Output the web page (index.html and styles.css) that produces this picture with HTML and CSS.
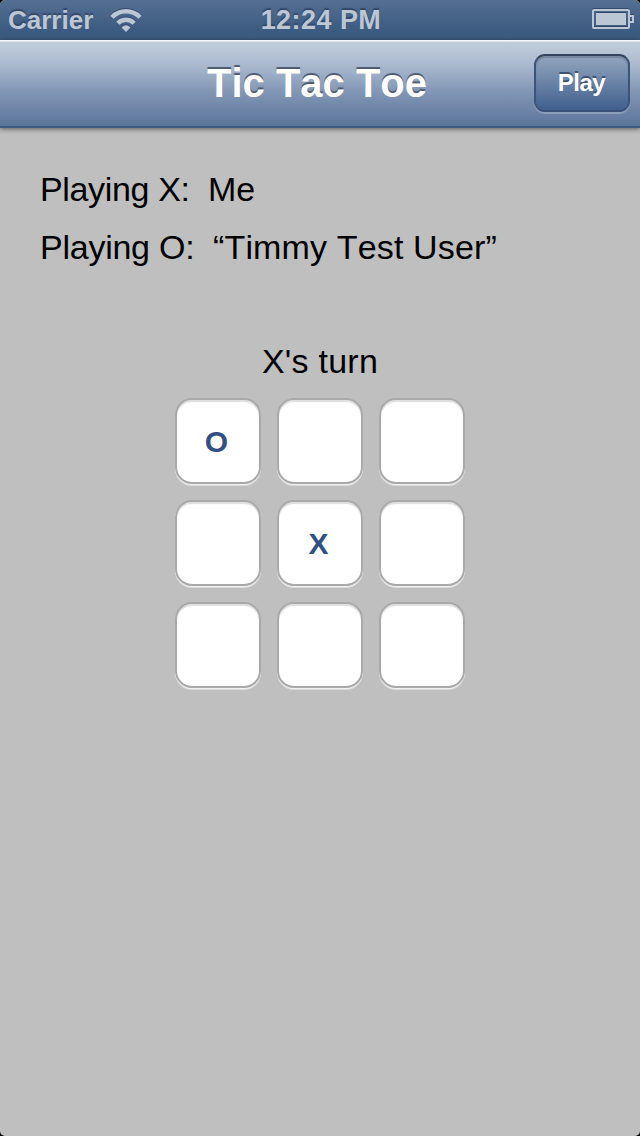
FILE: index.html
```
<!DOCTYPE html>
<html lang="en">
<head>
<meta charset="utf-8">
<title>Tic Tac Toe</title>
<link rel="stylesheet" href="styles.css">
</head>
<body>
<div class="screen">
  <header class="status">
    <div class="status-left">
      <span class="carrier">Carrier</span>
      <svg class="wifi" width="32" height="24" viewBox="0 0 32 24" fill="none" stroke="#bcc7d5">
        <path d="M2 9.2A19.6 19.6 0 0 1 30 9.2" stroke-width="4.4"/>
        <path d="M7.9 15.2A11.2 11.2 0 0 1 24.1 15.2" stroke-width="4.4"/>
        <path d="M11.6 19.6Q16 14.8 20.4 19.6L16 24Z" fill="#bcc7d5" stroke="none"/>
      </svg>
    </div>
    <span class="time">12:24 PM</span>
    <svg class="battery" width="42" height="20" viewBox="0 0 42 20" fill="none">
      <rect x="1" y="1" width="36" height="18" rx="1" stroke="#bcc7d5" stroke-width="2"/>
      <rect x="4" y="4" width="30" height="12" fill="#bcc7d5"/>
      <path d="M38 7h3v6h-3" stroke="#bcc7d5" stroke-width="2"/>
    </svg>
  </header>
  <nav class="navbar">
    <h1 class="title">Tic Tac Toe</h1>
    <button class="play" type="button"><span>Play</span></button>
  </nav>
  <main class="content">
    <p class="player"><span class="label-x">Playing X:</span><span class="name-x">Me</span></p>
    <p class="player"><span class="label-o">Playing O:</span><span class="name-o">“Timmy Test User”</span></p>
    <p class="turn"><span>X's turn</span></p>
    <div class="board">
      <div class="cell"><span>O</span></div><div class="cell"></div><div class="cell"></div>
      <div class="cell"></div><div class="cell"><span>X</span></div><div class="cell"></div>
      <div class="cell"></div><div class="cell"></div><div class="cell"></div>
    </div>
  </main>
</div>
</body>
</html>
```
FILE: styles.css
```
* { box-sizing: border-box; }
body { margin: 0; background: #000; font-family: "Liberation Sans", Arial, sans-serif; }
h1, p { margin: 0; }
.screen { width: 640px; height: 1136px; background: #bfbfbf; border-radius: 5px; overflow: hidden; }

.status {
  height: 40px; display: grid; grid-template-columns: 1fr auto 1fr; align-items: center;
  padding: 0 6px 0 8px; line-height: 40px; font-weight: bold; color: #bcc7d5;
  background: linear-gradient(#546f91, #3d5b81 75%, #3d5a80);
  text-shadow: 0 -2px 1px #34496a;
}
.status-left { display: flex; align-items: center; }
.carrier { font-size: 26px; width: 102px; white-space: nowrap; }
.wifi { margin-top: -1px; filter: drop-shadow(0 -1px 0 #34496a); }
.time { font-size: 27px; letter-spacing: .45px; }
.battery { justify-self: end; margin-top: -2px; filter: drop-shadow(0 -1px 0 #34496a); }

.navbar {
  height: 88px; display: grid; grid-template-columns: 1fr auto 1fr; align-items: center;
  padding-right: 10px; padding-left: 10px; border-bottom: 2px solid #3b5980;
  background: linear-gradient(#f4f7f9 0 1px, #c2cedc 2px, #a8b8ce 30%, #8296b5 60%, #5a759a 100%);
  box-shadow: 0 1px 5px rgba(0, 0, 0, .55);
}
.title {
  grid-column: 2; font-size: 40px; line-height: 86px; margin-top: -1px; margin-left: -6px;
  font-kerning: none; position: relative; left: 0;
  color: #fff; text-shadow: 0 -2px 0 #515d70; white-space: nowrap;
}
.play {
  justify-self: end; width: 96px; height: 58px; margin: -1px 0 0; padding: 0 1px 1px 0;
  border: 2px solid; border-color: #35455c #3c5475 #355079; border-radius: 11px;
  background: linear-gradient(#94a5be, #6d86a8 45%, #3f5f8e) padding-box;
  box-shadow: 0 2px 0 rgba(185, 200, 220, .4), inset 0 2px 1px rgba(50, 65, 90, .3);
  font: bold 24px/54px "Liberation Sans", Arial, sans-serif; letter-spacing: -.5px;
  color: #fff; text-shadow: 0 -2px 0 #42536f;
}

.content { padding-top: 32px; color: #000; font-size: 34px; }
.player { height: 58px; line-height: 58px; padding-left: 40px; display: flex; white-space: nowrap; }
.label-x { width: 168px; letter-spacing: -.35px; }
.label-o { width: 173px; letter-spacing: -.25px; }
.name-o { font-kerning: none; letter-spacing: .15px; }
.turn { margin-top: 65px; height: 40px; line-height: 40px; text-align: center; letter-spacing: .25px; }
.board {
  margin: 17px auto 0; width: 290px; display: grid;
  grid-template-columns: repeat(3, 86px); gap: 16px;
}
.cell {
  height: 86px; border: 2px solid #a9a9a9; border-radius: 17px; background: #fff;
  box-shadow: 0 1px 0 #f2f2f2, 0 2px 0 #dcdcdc, inset 0 2px 1px #dedede;
  display: flex; align-items: center; justify-content: center; padding: 2px 3px 0 0;
  font-size: 30px; font-weight: bold; color: #324f85;
}
```
